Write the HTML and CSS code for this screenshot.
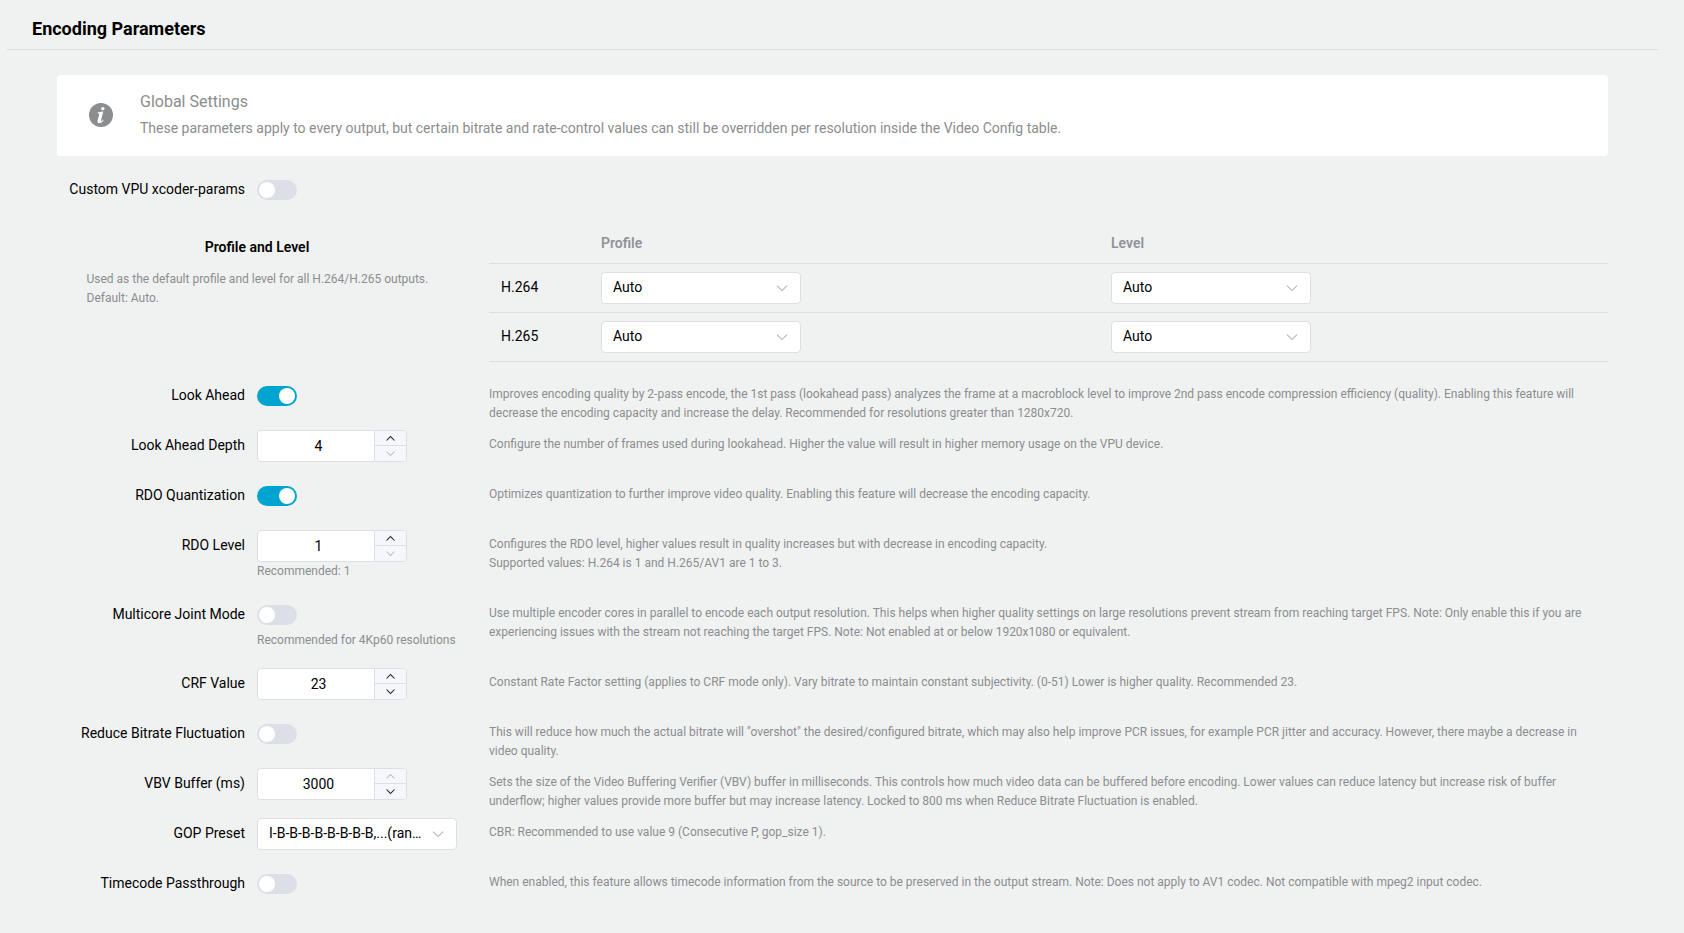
FILE: index.html
```
<!DOCTYPE html>
<html lang="en">
<head>
  <meta charset="UTF-8" />
  <meta name="viewport" content="width=device-width, initial-scale=1.0" />
  <title>Encoding Parameters</title>
  <link rel="stylesheet" href="styles.css">
</head>
<body>
  <svg class="sprite" aria-hidden="true">
    <symbol id="arrow-down" viewBox="0 0 1024 1024">
      <path d="M831.872 340.864 512 652.672 192.128 340.864a30.592 30.592 0 0 0-42.752 0 29.12 29.12 0 0 0 0 41.6L489.664 714.24a32 32 0 0 0 44.672 0l340.288-331.712a29.12 29.12 0 0 0 0-41.728 30.592 30.592 0 0 0-42.752 0z" />
    </symbol>
    <symbol id="arrow-up" viewBox="0 0 1024 1024">
      <path d="M831.872 683.136 512 371.328 192.128 683.136a30.592 30.592 0 0 1-42.752 0 29.12 29.12 0 0 1 0-41.6L489.664 309.76a32 32 0 0 1 44.672 0l340.288 331.712a29.12 29.12 0 0 1 0 41.728 30.592 30.592 0 0 1-42.752 0z" />
    </symbol>
  </svg>

  <h1 class="page-title">Encoding Parameters</h1>

  <main class="content">
    <div class="notice">
      <svg class="notice-icon" viewBox="0 0 24 24">
        <circle cx="12" cy="12" r="12" />
        <circle class="mark" cx="13.8" cy="5.6" r="1.7" />
        <path class="mark" d="M8.7 9.4l5-.8h.6l-2.2 8.4c-.2.8 0 1.2.4 1.1.5-.1 1-.8 1.5-1.6l.6.4c-1 2-2.3 3.2-4.1 3.2-1.7 0-2.3-1.1-1.9-2.7l1.5-5.7c.2-.9 0-1.3-1.5-1.4z" />
      </svg>
      <div>
        <h2>Global Settings</h2>
        <p>These parameters apply to every output, but certain bitrate and rate-control values can still be overridden per resolution inside the Video Config table.</p>
      </div>
    </div>

    <div class="row">
      <label>Custom VPU xcoder-params</label>
      <div class="control"><span class="switch"></span></div>
    </div>

    <section class="profile">
      <div class="profile-info">
        <h3>Profile and Level</h3>
        <p>Used as the default profile and level for all H.264/H.265 outputs.<br>Default: Auto.</p>
      </div>
      <table>
        <thead>
          <tr><th class="codec"></th><th class="level-profile">Profile</th><th>Level</th></tr>
        </thead>
        <tbody>
          <tr>
            <td class="name">H.264</td>
            <td><div class="select"><span>Auto</span><svg><use href="#arrow-down" /></svg></div></td>
            <td><div class="select"><span>Auto</span><svg><use href="#arrow-down" /></svg></div></td>
          </tr>
          <tr>
            <td class="name">H.265</td>
            <td><div class="select"><span>Auto</span><svg><use href="#arrow-down" /></svg></div></td>
            <td><div class="select"><span>Auto</span><svg><use href="#arrow-down" /></svg></div></td>
          </tr>
        </tbody>
      </table>
    </section>

    <div class="row">
      <label>Look Ahead</label>
      <div class="control"><span class="switch on"></span></div>
      <p class="help">Improves encoding quality by 2-pass encode, the 1st pass (lookahead pass) analyzes the frame at a macroblock level to improve 2nd pass encode compression efficiency (quality). Enabling this feature will decrease the encoding capacity and increase the delay. Recommended for resolutions greater than 1280x720.</p>
    </div>

    <div class="row">
      <label>Look Ahead Depth</label>
      <div class="control">
        <div class="number">
          <span class="value">4</span>
          <span class="step up"><svg><use href="#arrow-up" /></svg></span>
          <span class="step down disabled"><svg><use href="#arrow-down" /></svg></span>
        </div>
      </div>
      <p class="help">Configure the number of frames used during lookahead. Higher the value will result in higher memory usage on the VPU device.</p>
    </div>

    <div class="row">
      <label>RDO Quantization</label>
      <div class="control"><span class="switch on"></span></div>
      <p class="help">Optimizes quantization to further improve video quality. Enabling this feature will decrease the encoding capacity.</p>
    </div>

    <div class="row">
      <label>RDO Level</label>
      <div class="control">
        <div class="number">
          <span class="value">1</span>
          <span class="step up"><svg><use href="#arrow-up" /></svg></span>
          <span class="step down disabled"><svg><use href="#arrow-down" /></svg></span>
        </div>
        <p class="hint">Recommended: 1</p>
      </div>
      <p class="help">Configures the RDO level, higher values result in quality increases but with decrease in encoding capacity.<br>Supported values: H.264 is 1 and H.265/AV1 are 1 to 3.</p>
    </div>

    <div class="row">
      <label>Multicore Joint Mode</label>
      <div class="control">
        <span class="switch"></span>
        <p class="hint">Recommended for 4Kp60 resolutions</p>
      </div>
      <p class="help">Use multiple encoder cores in parallel to encode each output resolution. This helps when higher quality settings on large resolutions prevent stream from reaching target FPS. Note: Only enable this if you are experiencing issues with the stream not reaching the target FPS. Note: Not enabled at or below 1920x1080 or equivalent.</p>
    </div>

    <div class="row">
      <label>CRF Value</label>
      <div class="control">
        <div class="number">
          <span class="value">23</span>
          <span class="step up"><svg><use href="#arrow-up" /></svg></span>
          <span class="step down"><svg><use href="#arrow-down" /></svg></span>
        </div>
      </div>
      <p class="help">Constant Rate Factor setting (applies to CRF mode only). Vary bitrate to maintain constant subjectivity. (0-51) Lower is higher quality. Recommended 23.</p>
    </div>

    <div class="row">
      <label>Reduce Bitrate Fluctuation</label>
      <div class="control"><span class="switch"></span></div>
      <p class="help">This will reduce how much the actual bitrate will "overshot" the desired/configured bitrate, which may also help improve PCR issues, for example PCR jitter and accuracy. However, there maybe a decrease in video quality.</p>
    </div>

    <div class="row">
      <label>VBV Buffer (ms)</label>
      <div class="control">
        <div class="number">
          <span class="value">3000</span>
          <span class="step up disabled"><svg><use href="#arrow-up" /></svg></span>
          <span class="step down"><svg><use href="#arrow-down" /></svg></span>
        </div>
      </div>
      <p class="help">Sets the size of the Video Buffering Verifier (VBV) buffer in milliseconds. This controls how much video data can be buffered before encoding. Lower values can reduce latency but increase risk of buffer underflow; higher values provide more buffer but may increase latency. Locked to 800 ms when Reduce Bitrate Fluctuation is enabled.</p>
    </div>

    <div class="row">
      <label>GOP Preset</label>
      <div class="control">
        <div class="select"><span>I-B-B-B-B-B-B-B-B,...(ran…</span><svg><use href="#arrow-down" /></svg></div>
      </div>
      <p class="help">CBR: Recommended to use value 9 (Consecutive P, gop_size 1).</p>
    </div>

    <div class="row">
      <label>Timecode Passthrough</label>
      <div class="control"><span class="switch"></span></div>
      <p class="help">When enabled, this feature allows timecode information from the source to be preserved in the output stream. Note: Does not apply to AV1 codec. Not compatible with mpeg2 input codec.</p>
    </div>
  </main>
</body>
</html>
```
FILE: styles.css
```
* {
  box-sizing: border-box;
}
body {
  margin: 0;
  padding: 0 26px 0 7px;
  background: #f0f2f2;
  color: #000;
  font-family: Roboto, sans-serif;
  font-size: 14px;
}
h1, h2, h3, p {
  margin: 0;
}
.sprite {
  display: none;
}
.page-title {
  height: 50px;
  padding: 8px 25px 0;
  border-bottom: 1px solid #dcdfe0;
  font-size: 18px;
  font-weight: 700;
  line-height: 42px;
}
.content {
  padding: 25px 50px 0;
}

/* notice */
.notice {
  display: flex;
  align-items: center;
  height: 81px;
  margin-bottom: 18px;
  padding: 0 32px 1px;
  border-radius: 4px;
  background: #fff;
  color: #8c8d8f;
}
.notice-icon {
  width: 24px;
  height: 24px;
  margin-right: 27px;
  fill: #8c8d8f;
}
.notice-icon .mark {
  fill: #fff;
}
.notice h2 {
  font-size: 16px;
  font-weight: 400;
  line-height: 24px;
}
.notice p {
  margin-top: 3px;
  padding-bottom: 2px;
  line-height: 22px;
}

/* form rows */
.row {
  display: flex;
  align-items: flex-start;
  margin-bottom: 18px;
}
.row label {
  width: 200px;
  padding-right: 12px;
  line-height: 31px;
  text-align: right;
}
.control {
  width: 200px;
  margin-right: 32px;
}
.help, .hint, .profile-info p {
  color: #8c8d8f;
  font-size: 12px;
  line-height: 19px;
}
.help {
  flex: 1;
  height: 32px;
  padding-top: 5px;
}
.hint {
  white-space: nowrap;
}

.switch {
  display: flex;
  width: 40px;
  height: 20px;
  margin: 6px 0;
  padding: 2px;
  border-radius: 10px;
  background: #dcdfe6;
}
.switch::before {
  content: "";
  width: 16px;
  height: 16px;
  border-radius: 50%;
  background: #fff;
}
.switch.on {
  justify-content: flex-end;
  background: #00a5cf;
}

.select {
  display: flex;
  align-items: center;
  width: 200px;
  height: 32px;
  padding: 0 11px;
  border: 1px solid #dcdfe6;
  border-radius: 4px;
  background: #fff;
}
.select span {
  flex: 1;
  padding-bottom: 2px;
  white-space: nowrap;
}
.select svg {
  width: 14px;
  height: 14px;
  margin-left: 8px;
  fill: #a8abb2;
  stroke: #a8abb2;
  stroke-width: 15;
}

.number {
  display: grid;
  grid-template-columns: 1fr 32px;
  grid-template-rows: 15px 15px;
  width: 150px;
  height: 32px;
  border: 1px solid #dcdfe6;
  border-radius: 4px;
  background: #fff;
  overflow: hidden;
}
.number .value {
  grid-row: 1 / 3;
  padding-left: 5px;
  line-height: 30px;
  text-align: center;
}
.step {
  display: flex;
  align-items: center;
  justify-content: center;
  border-left: 1px solid #dcdfe6;
  background: #f5f7fa;
}
.step.up {
  border-bottom: 1px solid #dcdfe6;
}
.step svg {
  width: 11px;
  height: 11px;
  fill: #000;
  stroke: #000;
  stroke-width: 30;
}
.step.disabled svg {
  fill: #a8abb2;
  stroke: #a8abb2;
  stroke-width: 15;
}

/* profile and level */
.profile {
  display: flex;
  height: 138px;
  margin-bottom: 18px;
}
.profile-info {
  width: 432px;
  padding: 15px 29px 0 29.5px;
}
.profile-info h3 {
  width: 341px;
  margin-bottom: 14px;
  font-size: 14px;
  font-weight: 600;
  line-height: 17px;
  text-align: center;
}
table {
  flex: 1;
  border-collapse: separate;
  border-spacing: 0;
  table-layout: fixed;
}
th, td {
  padding: 8px 12px;
  border-bottom: 1px solid #dcdfe6;
  text-align: left;
}
th {
  height: 40px;
  padding: 7px 12px 9px;
  color: #909399;
  font-weight: 600;
}
th.codec {
  width: 100px;
}
th.level-profile {
  width: 510px;
}
td {
  height: 49px;
}
td.name {
  padding: 7px 12px 9px;
}
```
